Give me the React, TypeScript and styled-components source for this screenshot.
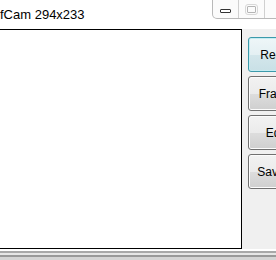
import { FC } from "react";
import styled, { createGlobalStyle } from "styled-components";

const GlobalStyle = createGlobalStyle`
  html, body {
    margin: 0;
    padding: 0;
    background: #ffffff;
    overflow: hidden;
  }
`;

interface ToolButtonProps {
  label: string;
  menu?: boolean;
  active?: boolean;
}

const ToolButton: FC<ToolButtonProps> = ({ label, menu, active }) => (
  <StyledToolButton $active={active}>
    <span>{label}</span>
    {menu && <StyledArrow>▾</StyledArrow>}
  </StyledToolButton>
);

const App: FC = () => {
  return (
    <>
      <GlobalStyle />
      <StyledWindow>
        <StyledTitleBar>
          <StyledTitle>GifCam 294x233</StyledTitle>
          <StyledControls>
            <StyledControl>
              <StyledMinIcon />
            </StyledControl>
            <StyledControl>
              <StyledMaxIcon />
            </StyledControl>
            <StyledClose />
          </StyledControls>
        </StyledTitleBar>
        <StyledClient>
          <StyledCanvas />
          <StyledSide>
            <ToolButton label="Rec" menu active />
            <ToolButton label="Frame" />
            <ToolButton label="Edit" />
            <ToolButton label="Save" menu />
          </StyledSide>
        </StyledClient>
        <StyledFrameBottom />
      </StyledWindow>
    </>
  );
};

export default App;

const StyledWindow = styled.div`
  display: flex;
  flex-direction: column;
  width: 276px;
  height: 260px;
  overflow: hidden;
  font-family: "Liberation Sans", Arial, sans-serif;
`;

const StyledTitleBar = styled.div`
  display: flex;
  justify-content: space-between;
  align-items: flex-start;
  height: 29px;
  flex: 0 0 29px;
  background: #ffffff;
`;

const StyledTitle = styled.div`
  margin-left: -13px;
  margin-top: 7px;
  font-size: 13px;
  line-height: 16px;
  color: #000000;
  white-space: nowrap;
`;

const StyledControls = styled.div`
  display: flex;
  flex-shrink: 0;
  margin-right: -33px;
  height: 19px;
  border: 1px solid #b9b9b9;
  border-top: none;
  border-radius: 0 0 5px 5px;
  background: #fbfbfb;
  box-sizing: border-box;
`;

const StyledControl = styled.div`
  display: flex;
  align-items: center;
  justify-content: center;
  width: 25px;
  border-right: 1px solid #d0d0d0;
`;

const StyledClose = styled.div`
  width: 43px;
`;

const StyledMinIcon = styled.div`
  width: 9px;
  height: 2px;
  margin-top: 4px;
  border: 1px solid #333333;
  border-radius: 1px;
  background: #ffffff;
`;

const StyledMaxIcon = styled.div`
  width: 7px;
  height: 5px;
  border: 1px solid #b5b5b5;
  outline: 1px solid #d8d8d8;
  outline-offset: 1px;
  border-radius: 1px;
`;

const StyledClient = styled.div`
  display: flex;
  flex: 1;
  background: #f0f0f0;
`;

const StyledCanvas = styled.div`
  flex: 0 0 243px;
  margin-left: -1px;
  background: #ffffff;
  border: 1px solid #000000;
  box-sizing: border-box;
`;

const StyledSide = styled.div`
  display: flex;
  flex-direction: column;
  gap: 4px;
  padding: 8px 0 0 6px;
`;

const StyledToolButton = styled.div<{ $active?: boolean }>`
  display: flex;
  align-items: center;
  justify-content: center;
  gap: 5px;
  width: 56px;
  height: 35px;
  box-sizing: border-box;
  border: 1px solid ${({ $active }) => ($active ? "#3c9aab" : "#707070")};
  border-radius: 3px;
  font-size: 12px;
  color: #000000;
  background: ${({ $active }) =>
    $active
      ? "linear-gradient(#eef6f8 0%, #e4f0f3 50%, #d3e6eb 51%, #c9e0e6 100%)"
      : "linear-gradient(#f2f2f2 0%, #ebebeb 50%, #dddddd 51%, #cfcfcf 100%)"};
  box-shadow: inset 0 0 0 1px
    ${({ $active }) => ($active ? "#c5ecf2" : "#fcfcfc")};
`;

const StyledArrow = styled.span`
  font-size: 9px;
`;

const StyledFrameBottom = styled.div`
  flex: 0 0 11px;
  background: linear-gradient(
    #ffffff 0px,
    #ffffff 2px,
    #a8a8a8 2px,
    #a8a8a8 4px,
    #e6e6e6 4px,
    #e6e6e6 6px,
    #999999 6px,
    #999999 8px,
    #d4d4d4 8px
  );
`;
